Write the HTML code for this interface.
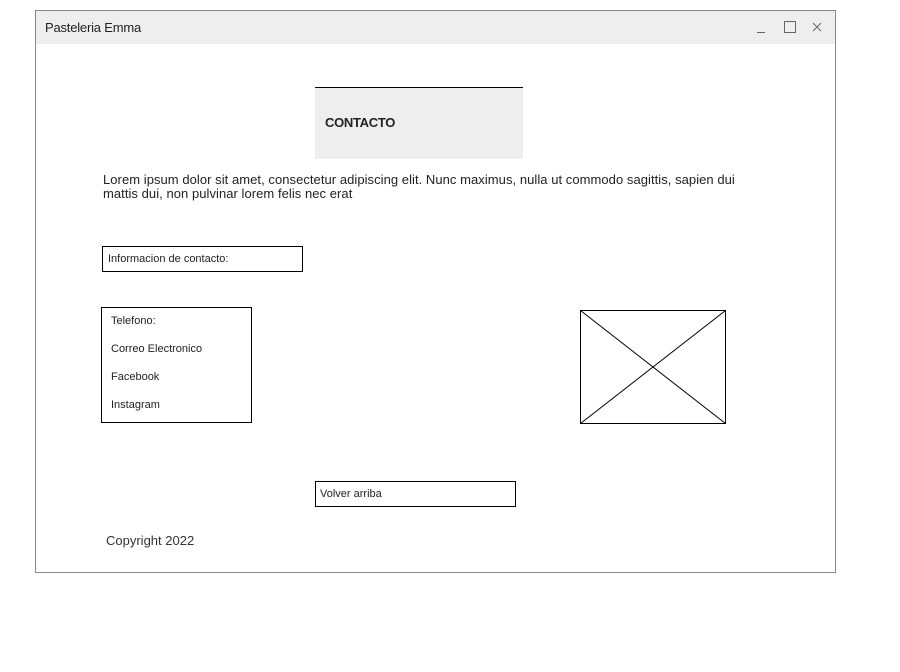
<!DOCTYPE html>
<html><head><style>
body{margin:0;width:900px;height:672px;background:#fff;font-family:"Liberation Sans",sans-serif;color:#222;position:relative;overflow:hidden}
.a{position:absolute;white-space:nowrap}
.box{position:absolute;border:1px solid #000;box-sizing:border-box}
</style></head><body>
<div class="a" style="left:35px;top:10px;width:801px;height:563px;border:1px solid #888;box-sizing:border-box"></div>
<div class="a" style="left:36px;top:11px;width:799px;height:33px;background:#eee"></div>
<div class="a" style="left:45px;top:20px;font-size:13px;letter-spacing:-0.2px">Pasteleria Emma</div>
<div class="a" style="left:757px;top:32px;width:8px;height:1px;background:#666"></div>
<div class="a" style="left:784px;top:21px;width:10px;height:10px;border:1px solid #666"></div>
<svg class="a" style="left:812px;top:22px" width="10" height="10"><path d="M1 1L9 9M9 1L1 9" stroke="#666"/></svg>
<div class="a" style="left:315px;top:87px;width:208px;height:71px;background:#eee;border-top:1px solid #000"></div>
<div class="a" style="left:325px;top:115px;font-size:13px;font-weight:bold;letter-spacing:-0.3px">CONTACTO</div>
<div class="a" style="left:103px;top:173px;font-size:13px;line-height:14px;letter-spacing:0.05px">Lorem ipsum dolor sit amet, consectetur adipiscing elit. Nunc maximus, nulla ut commodo sagittis, sapien dui<br>mattis dui, non pulvinar lorem felis nec erat</div>
<div class="box" style="left:102px;top:246px;width:201px;height:26px"></div>
<div class="a" style="left:108px;top:253px;font-size:11px;letter-spacing:0px">Informacion de contacto:</div>
<div class="box" style="left:101px;top:307px;width:151px;height:116px"></div>
<div class="a" style="left:111px;top:307px;font-size:11px;line-height:28px;letter-spacing:0px">Telefono:<br>Correo Electronico<br>Facebook<br>Instagram</div>
<svg class="a" style="left:580px;top:310px" width="146" height="114"><rect x="0.5" y="0.5" width="145" height="113" fill="none" stroke="#000"/><path d="M0.5 0.5L145.5 113.5M145.5 0.5L0.5 113.5" stroke="#000"/></svg>
<div class="box" style="left:315px;top:481px;width:201px;height:26px"></div>
<div class="a" style="left:320px;top:488px;font-size:11px;letter-spacing:0px">Volver arriba</div>
<div class="a" style="left:106px;top:533px;font-size:13px;color:#333;letter-spacing:0px">Copyright 2022</div>
</body></html>
